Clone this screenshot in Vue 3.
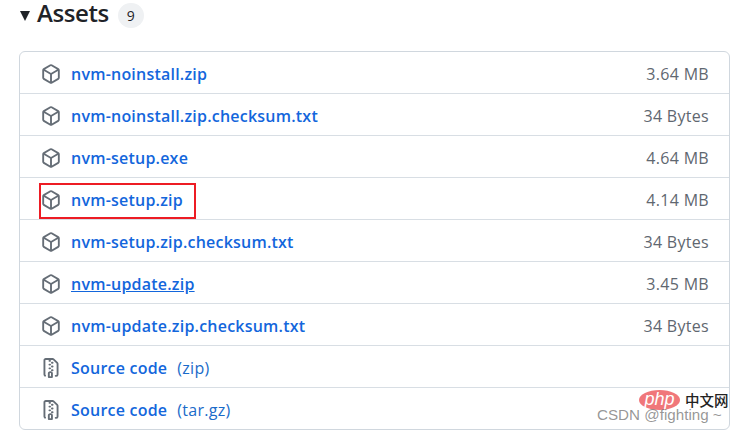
<script setup>
const pkg = 'm8.878.392 5.25 3.045c.54.314.872.89.872 1.514v6.098a1.75 1.75 0 0 1-.872 1.514l-5.25 3.045a1.75 1.75 0 0 1-1.756 0l-5.25-3.045A1.75 1.75 0 0 1 1 11.049V4.951c0-.624.332-1.201.872-1.514L7.122.392a1.75 1.75 0 0 1 1.756 0ZM7.875 1.69l-4.63 2.685L8 7.133l4.755-2.758-4.63-2.685a.248.248 0 0 0-.25 0ZM2.5 5.677v5.372c0 .09.047.171.125.216l4.625 2.683V8.432Zm6.25 8.271 4.625-2.683a.25.25 0 0 0 .125-.216V5.677L8.75 8.432Z'
const zip = 'M3.5 1.75v11.5c0 .09.048.173.126.217a.75.75 0 0 1-.752 1.298A1.748 1.748 0 0 1 2 13.25V1.75C2 .784 2.784 0 3.75 0h5.586c.464 0 .909.185 1.237.513l2.914 2.914c.329.328.513.773.513 1.237v8.586A1.75 1.75 0 0 1 12.25 15h-.5a.75.75 0 0 1 0-1.5h.5a.25.25 0 0 0 .25-.25V4.664a.25.25 0 0 0-.073-.177L9.513 1.573a.25.25 0 0 0-.177-.073H7.25a.75.75 0 0 1 0 1.5h-.5a.75.75 0 0 1 0-1.5h-3a.25.25 0 0 0-.25.25Zm3.75 8.75h.5c.966 0 1.75.784 1.75 1.75v3a.75.75 0 0 1-.75.75h-2.5a.75.75 0 0 1-.75-.75v-3c0-.966.784-1.75 1.75-1.75ZM6 5.25a.75.75 0 0 1 .75-.75h.5a.75.75 0 0 1 0 1.5h-.5A.75.75 0 0 1 6 5.25Zm.75 2.25h.5a.75.75 0 0 1 0 1.5h-.5a.75.75 0 0 1 0-1.5ZM8 6.75A.75.75 0 0 1 8.75 6h.5a.75.75 0 0 1 0 1.5h-.5A.75.75 0 0 1 8 6.75ZM8.75 3h.5a.75.75 0 0 1 0 1.5h-.5a.75.75 0 0 1 0-1.5ZM8 9.75A.75.75 0 0 1 8.75 9h.5a.75.75 0 0 1 0 1.5h-.5A.75.75 0 0 1 8 9.75Zm-1 2.5v2.25h1v-2.25a.25.25 0 0 0-.25-.25h-.5a.25.25 0 0 0-.25.25Z'
const assets = [
  { name: 'nvm-noinstall.zip', size: '3.64 MB' },
  { name: 'nvm-noinstall.zip.checksum.txt', size: '34 Bytes' },
  { name: 'nvm-setup.exe', size: '4.64 MB' },
  { name: 'nvm-setup.zip', size: '4.14 MB', marked: true },
  { name: 'nvm-setup.zip.checksum.txt', size: '34 Bytes' },
  { name: 'nvm-update.zip', size: '3.45 MB', hover: true },
  { name: 'nvm-update.zip.checksum.txt', size: '34 Bytes' },
  { name: 'Source code', suffix: '(zip)', source: true },
  { name: 'Source code', suffix: '(tar.gz)', source: true },
]
</script>

<template>
  <div class="page">
    <div class="head">
      <span class="tri"></span>
      <h2 class="title">Assets</h2>
      <span class="count">9</span>
    </div>
    <ul class="list">
      <li v-for="(a, i) in assets" :key="i" class="row">
        <svg class="icon" viewBox="0 0 16 16" width="20" height="20" aria-hidden="true">
          <path :d="a.source ? zip : pkg" />
        </svg>
        <a class="name" :class="{ under: a.hover }" href="#">{{ a.name }}</a>
        <span v-if="a.suffix" class="suffix">{{ a.suffix }}</span>
        <span v-if="a.size" class="size">{{ a.size }}</span>
        <span v-if="a.marked" class="mark"></span>
      </li>
    </ul>
    <div class="wm">
      <div class="wm-top">
        <span class="php">php</span>
        <span class="cn">中文网</span>
      </div>
      <div class="csdn">CSDN @fighting ~</div>
    </div>
  </div>
</template>

<style scoped>
.page {
  position: relative;
  width: 738px;
  height: 433px;
  overflow: hidden;
  background: #fff;
  font-family: "Open Sans", "Noto Sans", sans-serif;
  box-sizing: border-box;
  padding: 0 8px 0 19px;
}
.head {
  display: flex;
  align-items: center;
  height: 29px;
  margin-top: 1px;
}
.tri {
  width: 0;
  height: 0;
  margin-left: 1px;
  border-left: 5.5px solid transparent;
  border-right: 5.5px solid transparent;
  border-top: 10px solid #1f2328;
}
.title {
  margin: 0 0 6px 7px;
  font-size: 24px;
  font-weight: 600;
  line-height: 24px;
  letter-spacing: -0.4px;
  color: #1f2328;
}
.count {
  margin-left: 9px;
  width: 26px;
  height: 25px;
  border-radius: 13px;
  background: #eff1f3;
  color: #1f2328;
  font-size: 14px;
  font-weight: 500;
  display: flex;
  align-items: center;
  justify-content: center;
}
.list {
  list-style: none;
  margin: 21px 0 0;
  padding: 0;
  border: 1px solid #d0d7de;
  border-radius: 6px;
}
.row {
  position: relative;
  display: flex;
  align-items: center;
  height: 39px;
  padding: 2px 20px 0 21px;
  border-top: 1px solid #d8dee4;
}
.row:first-child {
  border-top: 0;
}
.icon {
  flex: none;
  fill: #656d76;
}
.name {
  margin-left: 10px;
  font-size: 16px;
  font-weight: 600;
  color: #1366dc;
  text-decoration: none;
  letter-spacing: 0.22px;
}
.name.under {
  text-decoration: underline;
}
.suffix {
  margin-left: 10px;
  font-size: 16px;
  color: #1a6bc9;
  letter-spacing: 0.3px;
}
.size {
  margin-left: auto;
  font-size: 16px;
  color: #5f6770;
  letter-spacing: 0.3px;
}
.mark {
  position: absolute;
  left: 19px;
  top: 5px;
  width: 153px;
  height: 32px;
  border: 2px solid #ed1c24;
}
.wm {
  position: absolute;
  left: 597px;
  top: 390px;
  width: 132px;
}
.wm-top {
  display: flex;
  align-items: center;
  height: 20px;
  margin-left: 42px;
}
.php {
  width: 41px;
  height: 20px;
  border-radius: 50%;
  background: #f0777a;
  color: #fff;
  font: italic 18px/18px "Liberation Sans", sans-serif;
  text-align: center;
}
.cn {
  margin-left: 5px;
  font: 500 14.5px/20px "Noto Sans CJK SC", sans-serif;
  color: #222;
  white-space: nowrap;
}
.csdn {
  margin-top: -4px;
  font: 15.2px/18px "Liberation Sans", sans-serif;
  color: rgba(110, 110, 110, 0.72);
  white-space: nowrap;
}
</style>
